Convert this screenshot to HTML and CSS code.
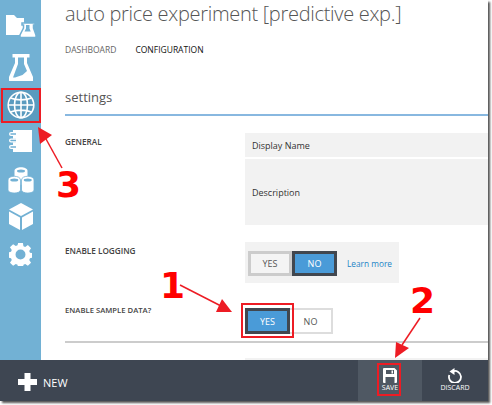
FILE: index.html
```html
<!DOCTYPE html>
<html lang="en">
<head>
<meta charset="utf-8">
<title>auto price experiment</title>
<link rel="stylesheet" href="styles.css">
</head>
<body>
<div class="window">
  <div class="main">
    <nav class="sidebar">
      <div class="nav-item nav-first">
        <svg width="31" height="23" viewBox="0 0 31 23"><path class="w" d="M1 0h8l3 3h7v17H1z"/><path class="w" d="M17 8h13v2h-1.500v3l2.500 7v2.500H15V20l3.500-7v-3H17z" stroke="#72b1d4" stroke-width="1.500"/><path class="b" d="M21 10h3.500v3.500l1.200 3h-6.200l1.500-3z"/></svg>
      </div>
      <div class="nav-item nav-flask">
        <svg width="24" height="27" viewBox="0 0 24 27"><path class="w" d="M3.500 0h17v3.500H18V9l6 14v4H0v-4L6 9V3.500H3.500z"/><path class="b" d="M9 3.500h6V10l3 7-4.500 4-7.500 2.500-2 0L9 10z"/></svg>
      </div>
      <div class="nav-item nav-active">
        <svg width="28" height="28" viewBox="0 0 28 28" fill="none" stroke="#fff" stroke-width="1.600"><circle cx="14" cy="14" r="12.800"/><ellipse cx="14" cy="14" rx="6.500" ry="12.800"/><path d="M14 1v26M1.200 14h25.600M3.500 7c6 2.500 15 2.500 21 0M3.500 21c6-2.500 15-2.500 21 0"/></svg>
      </div>
      <div class="nav-item nav-book">
        <svg width="23" height="22" viewBox="0 0 23 22"><path class="w" d="M4 0h19v22H4z"/><g fill="none" stroke="#72b1d4" stroke-width="3.500"><path d="M0 4h7M0 10.500h7M0 17h7"/></g><g fill="none" stroke="#fff" stroke-width="1.300"><path d="M7 2.700H2a1.300 1.300 0 0 0 0 2.700h5M7 9.200H2a1.300 1.300 0 0 0 0 2.700h5M7 15.700H2a1.300 1.300 0 0 0 0 2.700h5"/></g></svg>
      </div>
      <div class="nav-item nav-cyl">
        <svg width="26" height="26" viewBox="0 0 26 26"><path class="w" d="M6.500 4c0-5 13-5 13 0v10c0 5-13 5-13 0z"/><ellipse class="b" cx="13" cy="4" rx="4" ry="1.500"/><path class="w" d="M0 13c0-5 12.500-5 12.500 0v10c0 4-12.500 4-12.500 0z" stroke="#72b1d4" stroke-width=".8"/><ellipse class="b" cx="6.250" cy="13" rx="4" ry="1.500"/><path class="w" d="M13.500 13c0-5 12.500-5 12.500 0v10c0 4-12.500 4-12.500 0z" stroke="#72b1d4" stroke-width=".8"/><ellipse class="b" cx="19.750" cy="13" rx="4" ry="1.500"/></svg>
      </div>
      <div class="nav-item nav-cube">
        <svg width="24" height="27" viewBox="0 0 24 27"><path class="w" d="M12 0l12 6.500-12 6.500L0 6.500z"/><path class="w" d="M0 8.500l11 6V27L0 21z"/><path class="w" d="M24 8.500l-11 6V27l11-6z"/></svg>
      </div>
      <div class="nav-item nav-gear">
        <svg width="23" height="23" viewBox="0 0 24 24"><path class="w" fill-rule="evenodd" d="M9.500 0h5l.6 3.300 1.800.8 2.800-1.900 3.300 3.300-1.900 2.800.8 1.800 2.800.6v4.600l-2.800.6-.8 1.800 1.900 2.800-3.300 3.300-2.800-1.900-1.800.8-.6 3.300h-5l-.6-3.300-1.800-.8-2.800 1.900-3.300-3.300 1.900-2.800-.8-1.800-2.800-.6V9.700l2.800-.6.8-1.800-1.900-2.800 3.300-3.300 2.800 1.900 1.800-.8zM12 6.800a5.200 5.200 0 1 0 0 10.400 5.200 5.200 0 0 0 0-10.400z"/></svg>
      </div>
    </nav>
    <main class="content">
      <h1 class="title">auto price experiment [predictive exp.]</h1>
      <div class="tabs"><span class="tab">DASHBOARD</span><span class="tab tab-on">CONFIGURATION</span></div>
      <h2 class="section">settings</h2>
      <div class="form-row row-general">
        <div class="label">GENERAL</div>
        <div class="fields">
          <div class="field field-name">Display Name</div>
          <div class="field field-desc">Description</div>
        </div>
      </div>
      <div class="form-row row-logging">
        <div class="label">ENABLE LOGGING</div>
        <div class="panel">
          <span class="toggle">YES</span><span class="toggle on">NO</span>
          <a class="learn">Learn more</a>
        </div>
      </div>
      <div class="form-row row-sample">
        <div class="label">ENABLE SAMPLE DATA?</div>
        <div class="plain">
          <span class="toggle on">YES</span><span class="toggle off">NO</span>
        </div>
      </div>
      <div class="rule"></div>
      <div class="next-panel"></div>
    </main>
  </div>
  <footer class="bar">
    <div class="new">
      <svg width="19" height="18" viewBox="0 0 19 18"><path class="w" d="M6.500 0h6v6H19v6h-6.500v6h-6v-6H0V6h6.500z"/></svg>
      <span>NEW</span>
    </div>
    <div class="action action-save">
      <svg width="14" height="15" viewBox="0 0 14 15"><path class="w" fill-rule="evenodd" d="M1 0h10.500L14 2.500V14a1 1 0 0 1-1 1H1a1 1 0 0 1-1-1V1a1 1 0 0 1 1-1zM3 2v4h8V2zM2.500 9v6h9V9z"/><path class="w" d="M8.500 2.500h1.500v3H8.500z"/></svg>
      <span>SAVE</span>
    </div>
    <div class="action action-discard">
      <svg width="14" height="15" viewBox="0 0 14 15" fill="none" stroke="#fff" stroke-width="1.800"><path d="M5 3.300a6 6 0 1 1-3.700 3.700"/><path class="w" stroke="none" d="M6.500 0v7L1.500 3.500z"/></svg>
      <span>DISCARD</span>
    </div>
  </footer>
</div>
<div class="mark mark-globe"></div>
<div class="mark mark-yes"></div>
<div class="mark mark-save"></div>
<svg class="arrows" width="492" height="405" viewBox="0 0 492 405">
  <g class="arrow">
    <path d="M62 168L46 139"/><path class="head" d="M38 127l14 8-12 9z"/>
    <path d="M180 285L221 306"/><path class="head" d="M232 312l-16 0 6-13z"/>
    <path d="M420 318L402 345"/><path class="head" d="M395 358l1-16 13 6z"/>
  </g>
</svg>
<span class="num num-1">1</span>
<span class="num num-2">2</span>
<span class="num num-3">3</span>
</body>
</html>
```
FILE: styles.css
```css
* { box-sizing: border-box; }
html, body { margin: 0; padding: 0; background: #fff; }
body { width: 492px; height: 405px; position: relative; overflow: hidden; font-family: "Open Sans", "Noto Sans", sans-serif; }
.w { fill: #fff; }
.b { fill: #72b1d4; }

.window { width: 488px; height: 401px; display: flex; flex-direction: column; box-shadow: 2px 2px 2px #555; background: #fff; overflow: hidden; }
.main { height: 360px; display: flex; overflow: hidden; }

.sidebar { width: 41px; background: #72b1d4; display: flex; flex-direction: column; flex: none; }
.nav-item { display: flex; justify-content: center; align-items: center; width: 41px; flex: none; }
.nav-first { margin-top: 15px; height: 23px; }
.nav-flask { margin-top: 15px; height: 28px; }
.nav-active { margin-top: 7px; height: 34px; background: #5a9bbf; }
.nav-book { margin-top: 8px; height: 22px; }
.nav-cyl { margin-top: 15px; height: 26px; }
.nav-cube { margin-top: 10px; height: 27px; }
.nav-gear { margin-top: 13px; height: 23px; }

.content { flex: 1; min-width: 0; padding-left: 24px; overflow: hidden; }
.title { margin: 0; height: 32px; font-size: 20px; letter-spacing: -0.3px; line-height: 28px; font-weight: 300; color: #555; white-space: nowrap; }
.tabs { display: flex; gap: 19px; margin-top: 11px; height: 14px; font-size: 8.500px; line-height: 14px; color: #666; }
.tab-on { color: #111; }
.section { margin: 30px 0 0; height: 29px; font-size: 13px; line-height: 20px; font-weight: 400; color: #555; border-bottom: 2px solid #88b8e0; }

.form-row { display: flex; }
.label { width: 180px; flex: none; font-size: 8.200px; font-weight: 600; line-height: 12px; color: #444; white-space: nowrap; }
.row-general { margin-top: 17px; height: 92px; }
.row-general .label { margin-top: 3px; }
.fields { flex: 1; display: flex; flex-direction: column; gap: 2px; }
.field { background: #f2f2f2; padding-left: 7px; display: flex; align-items: center; font-size: 9px; color: #333; }
.field-name { height: 24px; }
.field-desc { height: 66px; }

.row-logging { margin-top: 17px; height: 41px; }
.row-logging .label { margin-top: 3px; }
.panel { width: 154px; height: 41px; background: #f2f2f2; padding: 9px 0 0 3px; display: flex; align-items: flex-start; }
.toggle { width: 44px; height: 25px; display: flex; align-items: center; justify-content: center; border: 3px solid #ccc; background: #f4f4f4; font-size: 9px; color: #555; }
.toggle.on { width: 45px; background: #4a9bd8; border-color: #41474f; color: #fff; }
.toggle.off { width: 43px; background: #fff; border: 2px solid #ddd; border-left: 0; }
.learn { margin: 7px 0 0 10px; font-size: 8.300px; line-height: 12px; color: #1d84c6; white-space: nowrap; }

.row-sample { margin-top: 25px; height: 26px; }
.row-sample .label { margin-top: -4px; font-size: 7.700px; }
.plain { display: flex; }
.plain .toggle { height: 26px; }

.rule { margin-top: 7px; height: 2px; background: #ccc; }
.next-panel { margin: 15px 0 0 180px; height: 4px; background: #f2f2f2; }

.bar { height: 41px; flex: none; background: #3e4652; display: flex; align-items: stretch; color: #fff; }
.new { width: 358px; flex: none; display: flex; align-items: center; gap: 6px; padding: 3px 0 0 18px; font-size: 11px; }
.action { display: flex; flex-direction: column; align-items: center; justify-content: flex-start; gap: 0; padding-top: 8px; font-size: 7px; line-height: 10px; }
.action svg { margin-bottom: 0; flex: none; }
.action-save { width: 64px; background: #4f5863; }
.action-discard { width: 66px; }

.mark { position: absolute; border: 2px solid #ed1c24; }
.mark-globe { left: 1px; top: 88px; width: 40px; height: 35px; }
.mark-yes { left: 241px; top: 303px; width: 53px; height: 35px; }
.mark-save { left: 377px; top: 363px; width: 24px; height: 33px; }

.arrows { position: absolute; left: 0; top: 0; pointer-events: none; }
.arrow path { stroke: #ed1c24; stroke-width: 1.500; fill: none; }
.arrow path.head { stroke: none; fill: #ed1c24; }

.num { position: absolute; font-family: "DejaVu Sans", sans-serif; font-weight: 700; font-size: 36px; line-height: 36px; color: #f00; }
.num-1 { left: 160px; top: 268px; }
.num-2 { left: 410px; top: 283px; }
.num-3 { left: 56px; top: 167px; }
```
